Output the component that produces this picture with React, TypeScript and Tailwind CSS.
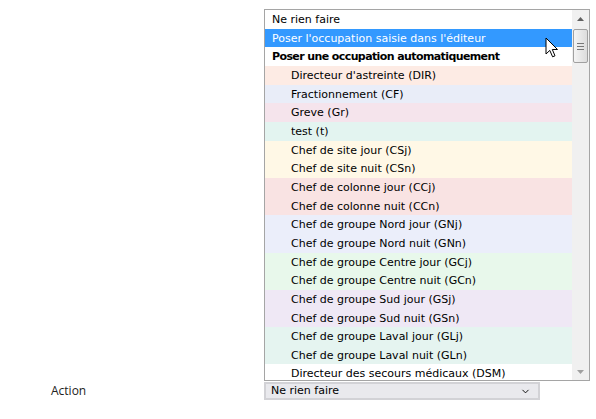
import { ChevronDown } from 'lucide-react';

type Option = { label: string; bg: string; indent?: boolean; bold?: boolean; active?: boolean };

const options: Option[] = [
  { label: 'Ne rien faire', bg: 'bg-white' },
  { label: "Poser l'occupation saisie dans l'éditeur", bg: 'bg-[#3399ff]', active: true },
  { label: 'Poser une occupation automatiquement', bg: 'bg-white', bold: true },
  { label: "Directeur d'astreinte (DIR)", bg: 'bg-[#fdebe4]', indent: true },
  { label: 'Fractionnement (CF)', bg: 'bg-[#e9edf8]', indent: true },
  { label: 'Greve (Gr)', bg: 'bg-[#f5e4ec]', indent: true },
  { label: 'test (t)', bg: 'bg-[#e3f4f0]', indent: true },
  { label: 'Chef de site jour (CSj)', bg: 'bg-[#fff8e6]', indent: true },
  { label: 'Chef de site nuit (CSn)', bg: 'bg-[#fff8e6]', indent: true },
  { label: 'Chef de colonne jour (CCj)', bg: 'bg-[#f9e3e3]', indent: true },
  { label: 'Chef de colonne nuit (CCn)', bg: 'bg-[#f9e3e3]', indent: true },
  { label: 'Chef de groupe Nord jour (GNj)', bg: 'bg-[#ebeefa]', indent: true },
  { label: 'Chef de groupe Nord nuit (GNn)', bg: 'bg-[#ebeefa]', indent: true },
  { label: 'Chef de groupe Centre jour (GCj)', bg: 'bg-[#e8f8eb]', indent: true },
  { label: 'Chef de groupe Centre nuit (GCn)', bg: 'bg-[#e8f8eb]', indent: true },
  { label: 'Chef de groupe Sud jour (GSj)', bg: 'bg-[#efe8f5]', indent: true },
  { label: 'Chef de groupe Sud nuit (GSn)', bg: 'bg-[#efe8f5]', indent: true },
  { label: 'Chef de groupe Laval jour (GLj)', bg: 'bg-[#e5f4f0]', indent: true },
  { label: 'Chef de groupe Laval nuit (GLn)', bg: 'bg-[#e5f4f0]', indent: true },
  { label: 'Directeur des secours médicaux (DSM)', bg: 'bg-white', indent: true },
];

export default function App() {
  return (
    <div className="relative w-[596px] h-[419px] bg-white overflow-hidden font-['DejaVu_Sans',Verdana,sans-serif] text-[11px] text-black">
      {/* form row */}
      <div className="flex items-center pt-[382px]">
        <div className="w-[264px] pl-[51px] font-['Open_Sans',sans-serif] text-[12px] text-[#222]">Action</div>
        <div className="flex items-center justify-between w-[276px] h-[18px] bg-[#e9e9ed] border-2 border-[#d2d2d6] pl-[5px] pr-[7px]">
          <span>Ne rien faire</span>
          <ChevronDown size={11} strokeWidth={2} />
        </div>
      </div>

      {/* open option list */}
      <div className="absolute left-[264px] top-[9px] w-[326px] h-[372px] border border-[#a5a5a5] bg-white flex overflow-hidden">
        <div className="flex-1 min-w-0">
          {options.map((o) => (
            <div
              key={o.label}
              className={`h-[18.67px] pt-[2px] leading-[16.67px] whitespace-nowrap ${o.bg} ${o.indent ? 'pl-[26px]' : 'pl-[7px]'} ${o.bold ? 'font-bold tracking-[-0.6px]' : ''} ${o.active ? 'text-white' : ''}`}
            >
              {o.label}
            </div>
          ))}
        </div>
        {/* scrollbar */}
        <div className="w-[17px] bg-[#f0f0f0] flex flex-col items-center">
          <div className="h-[17px] flex items-center justify-center">
            <svg width="7" height="4" viewBox="0 0 7 4"><path d="M3.5 0L7 4H0z" fill="#606060" /></svg>
          </div>
          <div className="w-[15px] h-[34px] mt-[2px] rounded-[2px] border border-[#a0a0a0] bg-gradient-to-r from-[#f4f4f4] to-[#dcdcdc] flex flex-col items-center justify-center gap-[2px]">
            <div className="w-[7px] h-px bg-[#777]" />
            <div className="w-[7px] h-px bg-[#777]" />
            <div className="w-[7px] h-px bg-[#777]" />
          </div>
          <div className="flex-1" />
          <div className="h-[17px] flex items-center justify-center">
            <svg width="7" height="4" viewBox="0 0 7 4"><path d="M0 0H7L3.5 4z" fill="#a0a0a0" /></svg>
          </div>
        </div>
      </div>

      {/* mouse pointer */}
      <svg className="absolute left-[545px] top-[37px]" width="14" height="22" viewBox="0 0 14 22">
        <path d="M1 1V17L4.8 13.4L7.6 19.8L10 18.8L7.3 12.5H12.5Z" fill="white" stroke="black" strokeWidth="1" strokeLinejoin="round" />
      </svg>
    </div>
  );
}
